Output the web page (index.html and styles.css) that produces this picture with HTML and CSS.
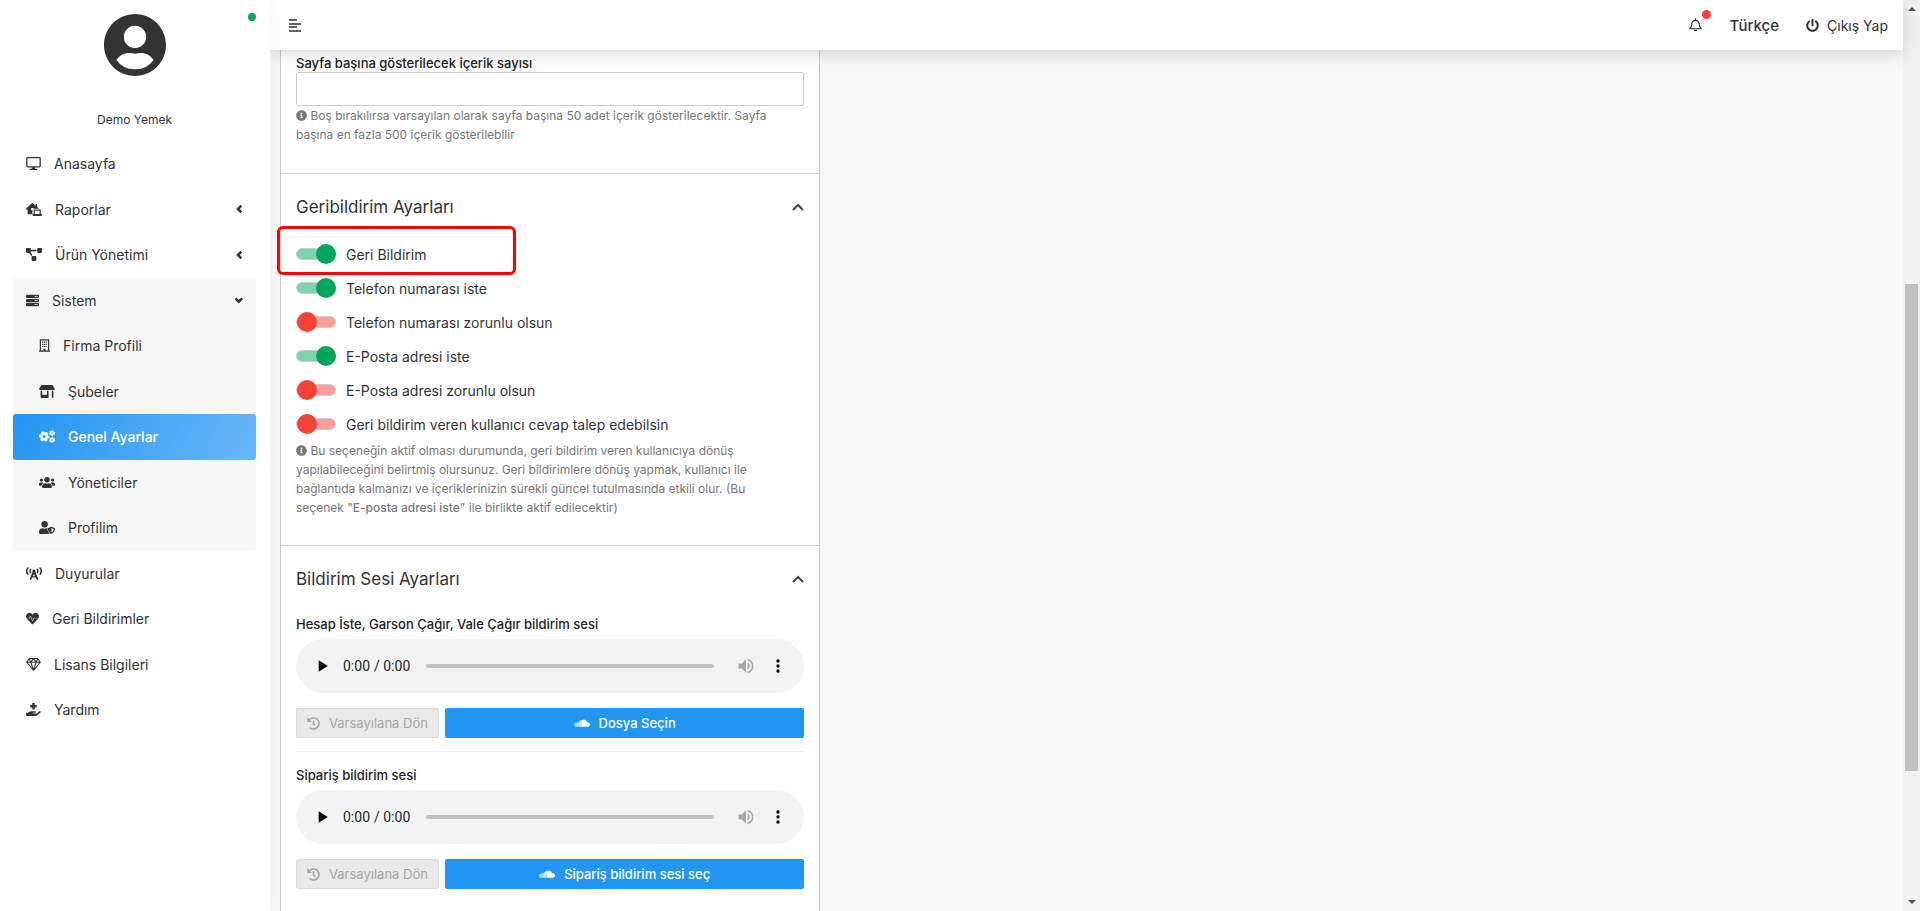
FILE: index.html
```
<!DOCTYPE html>
<html lang="tr">
<head>
    <meta charset="UTF-8">
    <meta name="viewport" content="width=device-width, initial-scale=1.0">
    <title>Genel Ayarlar</title>
    <link rel="stylesheet" href="styles.css">
</head>
<body>
    <!-- icons -->
    <svg class="sprite" aria-hidden="true">
        <symbol id="desktop" viewBox="0 0 576 512"><path fill-rule="evenodd" d="M528 0H48C21.5 0 0 21.5 0 48v320c0 26.500 21.500 48 48 48h192l-16 48h-72c-13 0-24 11-24 24s11 24 24 24h272c13 0 24-11 24-24s-11-24-24-24h-72l-16-48h192c26.500 0 48-21.500 48-48V48c0-26.500-21.500-48-48-48zM50 50h476v316H50z"/></symbol>
        <symbol id="laptop-house" viewBox="0 0 640 512"><path d="M272 288H208v-80c0-9 7-16 16-16h64c9 0 16 7 16 16v24c12-5 26-8 40-8h170L448 158V48c0-9-7-16-16-16h-32c-9 0-16 7-16 16v53L282 8c-14-11-38-11-52 0L12 206c-9 8-16 24-7 34l20 22c9 9 21 6 28 0l11-10v164c0 18 14 32 32 32h160V296z"/><path fill-rule="evenodd" d="M304 256h288v184h48v24c0 26-22 48-48 48H304c-26 0-48-22-48-48v-24h48zm48 48v136h192V304z"/></symbol>
        <symbol id="diagram" viewBox="0 0 640 512"><path d="M384 320H256c-17.670 0-32 14.330-32 32v128c0 17.670 14.330 32 32 32h128c17.670 0 32-14.330 32-32V352c0-17.670-14.330-32-32-32zM192 32c0-17.670-14.330-32-32-32H32C14.330 0 0 14.330 0 32v128c0 17.670 14.330 32 32 32h95.720l73.160 128.040C211.980 300.980 232.400 288 256 288h.280L192 175.510V128h224V64H192V32zM608 0H480c-17.670 0-32 14.330-32 32v128c0 17.670 14.330 32 32 32h128c17.670 0 32-14.330 32-32V32c0-17.670-14.330-32-32-32z"/></symbol>
        <symbol id="server" viewBox="0 0 512 512"><rect y="32" width="512" height="128" rx="32"/><rect y="192" width="512" height="128" rx="32"/><rect y="352" width="512" height="128" rx="32"/><path stroke="#f7f7f7" stroke-width="44" stroke-dasharray="44 22" d="M344 96h112M344 256h112M344 416h112"/></symbol>
        <symbol id="building" viewBox="0 0 448 512"><path fill-rule="evenodd" d="M32 0h384v464h32v48H0v-48h32zm48 48v416h104v-80h80v80h104V48z"/><path d="M128 96h48v48h-48zM200 96h48v48h-48zM272 96h48v48h-48zM128 184h48v48h-48zM200 184h48v48h-48zM272 184h48v48h-48zM128 272h48v48h-48zM200 272h48v48h-48zM272 272h48v48h-48z"/></symbol>
        <symbol id="store" viewBox="0 0 640 512"><path d="M320 384H128V224H64v256c0 17.700 14.300 32 32 32h256c17.700 0 32-14.300 32-32V224h-64v160zm314.600-241.800l-85.300-128c-6-8.900-16-14.200-26.700-14.200H117.400c-10.700 0-20.700 5.300-26.600 14.200l-85.300 128c-14.200 21.300 1 49.800 26.600 49.800H608c25.500 0 40.700-28.500 26.600-49.800zM512 496c0 8.800 7.200 16 16 16h32c8.800 0 16-7.200 16-16V224h-64v272z"/></symbol>
        <symbol id="cogs" viewBox="0 0 640 512"><g fill="none" stroke="currentColor"><circle cx="205" cy="256" r="115" stroke-width="104"/><circle cx="205" cy="256" r="172" stroke-width="72" stroke-dasharray="98 82" stroke-dashoffset="45"/><circle cx="520" cy="118" r="62" stroke-width="60"/><circle cx="520" cy="118" r="96" stroke-width="44" stroke-dasharray="54 46"/><circle cx="520" cy="394" r="62" stroke-width="60"/><circle cx="520" cy="394" r="96" stroke-width="44" stroke-dasharray="54 46"/></g></symbol>
        <symbol id="users" viewBox="0 0 640 512"><path d="M96 224c35.300 0 64-28.700 64-64s-28.700-64-64-64-64 28.700-64 64 28.700 64 64 64zm448 0c35.300 0 64-28.700 64-64s-28.700-64-64-64-64 28.700-64 64 28.700 64 64 64zm32 32h-64c-17.600 0-33.500 7.100-45.100 18.600 40.300 22.100 68.900 62 75.100 109.400h66c17.700 0 32-14.300 32-32v-32c0-35.300-28.700-64-64-64zm-256 0c61.900 0 112-50.100 112-112S381.900 32 320 32 208 82.100 208 144s50.100 112 112 112zm76.800 32h-8.300c-20.800 10-43.900 16-68.500 16s-47.600-6-68.500-16h-8.300C179.600 288 128 339.600 128 403.200V432c0 26.500 21.500 48 48 48h288c26.500 0 48-21.500 48-48v-28.800c0-63.600-51.600-115.200-115.200-115.200zm-223.700-13.400C161.500 263.100 145.600 256 128 256H64c-35.300 0-64 28.700-64 64v32c0 17.700 14.300 32 32 32h65.900c6.300-47.400 34.900-87.300 75.200-109.400z"/></symbol>
        <symbol id="user-shield" viewBox="0 0 640 512"><circle cx="224" cy="128" r="128"/><path d="M314 288c-54 22-126 22-180 0C60 288 0 348 0 422v42c0 26 22 48 48 48h352c15 0 22-3 30-8-60-48-94-120-94-216z"/><path fill-rule="evenodd" d="M622 271l-116-44c-6-3-14-3-20 0l-116 44c-11 4-18 14-18 25 0 124 77 190 134 214 6 3 14 3 20 0 46-19 134-81 134-214 0-11-7-21-18-25zM496 450V276l94 36c-6 76-53 120-94 138z"/></symbol>
        <symbol id="tower" viewBox="0 0 640 512"><g fill="none" stroke="currentColor" stroke-width="60" stroke-linecap="round"><path d="M76 34c-60 78-60 172 0 250M564 34c60 78 60 172 0 250M186 96c-26 44-26 88 0 126M454 96c26 44 26 88 0 126"/></g><circle cx="320" cy="160" r="64"/><path d="M278 170h84l140 326-64 16-40-94H242l-40 94-64-16zm42 104l-42 90h84z" fill-rule="evenodd"/></symbol>
        <symbol id="heartbeat" viewBox="0 0 512 512"><path d="M320 243l-48 106c-6 13-24 13-30-1l-69-166-30 73c-3 7-8 9-15 9H30c3 3-2-2 203 207 13 13 33 13 46 0 203-207 199-204 203-207h-98c-6 0-12-3-14-9zM474 74l-3-3c-50-52-132-52-183 0l-32 33-32-33C173 19 91 19 41 71l-3 3c-48 49-50 127-8 180h92l36-87c6-13 24-13 30 0l70 169 48-106c6-12 23-12 29 0l22 24h125c42-53 40-131-8-180z"/></symbol>
        <symbol id="gem" viewBox="0 0 576 512"><path fill="none" stroke="currentColor" stroke-width="42" stroke-linejoin="round" d="M120 22h336l98 146-266 320L22 168zM22 168h532M120 22l60 146 108 300 108-300 60-146M180 168L288 22l108 146"/></symbol>
        <symbol id="hand-medical" viewBox="0 0 576 512"><path d="M336 80V16c0-9-7-16-16-16h-64c-9 0-16 7-16 16v64h-64c-9 0-16 7-16 16v64c0 9 7 16 16 16h64v64c0 9 7 16 16 16h64c9 0 16-7 16-16v-64h64c9 0 16-7 16-16V96c0-9-7-16-16-16zM565 328c-12-11-31-10-43 0l-93 74c-11 9-25 14-40 14H272c-9 0-16-7-16-16s7-16 16-16h78c16 0 31-11 34-27 3-20-12-37-32-37H192c-27 0-53 9-74 26l-46 38H16c-9 0-16 7-16 16v96c0 9 7 16 16 16h357c14 0 28-5 39-14l152-121c15-12 16-35 1-49z"/></symbol>
        <symbol id="info" viewBox="0 0 512 512"><path d="M256 8C119.043 8 8 119.083 8 256c0 136.997 111.043 248 248 248s248-111.003 248-248C504 119.083 392.957 8 256 8zm0 110c23.196 0 42 18.804 42 42s-18.804 42-42 42-42-18.804-42-42 18.804-42 42-42zm56 254c0 6.627-5.373 12-12 12h-88c-6.627 0-12-5.373-12-12v-24c0-6.627 5.373-12 12-12h12v-64h-12c-6.627 0-12-5.373-12-12v-24c0-6.627 5.373-12 12-12h64c6.627 0 12 5.373 12 12v100h12c6.627 0 12 5.373 12 12v24z"/></symbol>
        <symbol id="power" viewBox="0 0 512 512"><path d="M400 54.100c63 45 104 118.600 104 201.900 0 136.800-110.800 247.700-247.500 248C120 504.300 8.200 393 8 256.400 7.900 173.100 48.900 99.300 111.800 54.200c11.700-8.300 28-4.800 35 7.700L162.600 90c5.900 10.500 3.100 23.800-6.600 31-41.500 30.800-68 79.600-68 134.900-.1 92.300 74.500 168.100 168 168.100 91.600 0 168.600-74.200 168-169.100-.3-51.800-24.700-101.800-68.100-134-9.700-7.200-12.400-20.500-6.500-30.900l15.800-28.100c7-12.400 23.200-16.100 34.800-7.800zM296 264V24c0-13.300-10.700-24-24-24h-32c-13.300 0-24 10.700-24 24v240c0 13.300 10.700 24 24 24h32c13.300 0 24-10.700 24-24z"/></symbol>
        <symbol id="history" viewBox="0 0 512 512"><path d="M504 255.531c.253 136.640-111.180 248.372-247.820 248.468-59.015.042-113.223-20.530-155.822-54.911-11.077-8.940-11.905-25.541-1.839-35.607l11.267-11.267c8.609-8.609 22.353-9.551 31.891-1.984C173.062 425.135 212.781 440 256 440c101.705 0 184-82.311 184-184 0-101.705-82.311-184-184-184-48.814 0-93.149 18.969-126.068 49.932l50.754 50.754c10.080 10.080 2.941 27.314-11.313 27.314H24c-8.837 0-16-7.163-16-16V38.627c0-14.254 17.234-21.393 27.314-11.314l49.372 49.372C129.209 34.136 189.552 8 256 8c136.810 0 247.747 110.780 248 247.531zm-180.912 78.784l9.823-12.630c8.138-10.463 6.253-25.542-4.210-33.679L288 256.349V152c0-13.255-10.745-24-24-24h-16c-13.255 0-24 10.745-24 24v135.651l65.409 50.874c10.463 8.137 25.541 6.253 33.679-4.210z"/></symbol>
        <symbol id="soundcloud" viewBox="0 0 640 512"><path d="M310 120c88-54 196-6 210 92 66-18 120 22 120 84 0 52-38 88-84 88H310z"/><path opacity=".8" d="M180 200c30-20 44-42 62-54 24-16 44-22 68-26v264H180z"/><path opacity=".7" d="M0 300c6-46 44-76 90-74 30-4 60-14 90-26v184H84c-50 0-84-36-84-84z"/></symbol>
        <symbol id="arrow-left" viewBox="0 0 12 12"><path d="M10 2L6 6l4 4" fill="none" stroke="currentColor" stroke-width="3"/></symbol>
        <symbol id="arrow-down" viewBox="0 0 12 12"><path d="M3 4l4 4 4-4" fill="none" stroke="currentColor" stroke-width="3"/></symbol>
        <symbol id="arrow-up" viewBox="0 0 12 12"><path d="M1 9l5-5 5 5" fill="none" stroke="#444" stroke-width="2"/></symbol>
    </svg>

    <div class="layout">
        <aside class="sidebar">
            <span class="online"></span>
            <div class="user">
                <svg class="avatar" viewBox="2 2 20 20"><path d="M12 2C6.480 2 2 6.480 2 12s4.480 10 10 10 10-4.480 10-10S17.520 2 12 2zm0 3.800a3.600 3.600 0 0 1 0 7.200 3.600 3.600 0 0 1 0-7.200zm0 14a7.200 7.200 0 0 1-6-3c1.600-2.200 3.600-2.600 6-2 2.400-.6 4.400-.2 6 2a7.200 7.200 0 0 1-6 3z"/></svg>
                <p>Demo Yemek</p>
            </div>
            <nav class="menu">
                <a href="#"><svg class="w15"><use href="#desktop"/></svg>Anasayfa</a>
                <a href="#"><svg class="w16"><use href="#laptop-house"/></svg>Raporlar<svg class="arrow"><use href="#arrow-left"/></svg></a>
                <a href="#"><svg class="w16"><use href="#diagram"/></svg>Ürün Yönetimi<svg class="arrow"><use href="#arrow-left"/></svg></a>
                <div class="group">
                    <a href="#"><svg class="w13"><use href="#server"/></svg>Sistem<svg class="arrow"><use href="#arrow-down"/></svg></a>
                    <div class="submenu">
                        <a href="#"><svg class="w11"><use href="#building"/></svg>Firma Profili</a>
                        <a href="#"><svg class="w16"><use href="#store"/></svg>Şubeler</a>
                        <a href="#" class="active"><svg class="w16"><use href="#cogs"/></svg>Genel Ayarlar</a>
                        <a href="#"><svg class="w16"><use href="#users"/></svg>Yöneticiler</a>
                        <a href="#"><svg class="w16"><use href="#user-shield"/></svg>Profilim</a>
                    </div>
                </div>
                <a href="#"><svg class="w16"><use href="#tower"/></svg>Duyurular</a>
                <a href="#"><svg class="w13"><use href="#heartbeat"/></svg>Geri Bildirimler</a>
                <a href="#"><svg class="w15"><use href="#gem"/></svg>Lisans Bilgileri</a>
                <a href="#"><svg class="w15"><use href="#hand-medical"/></svg>Yardım</a>
            </nav>
        </aside>

        <div class="page">
            <header class="topbar">
                <button type="button" class="toggle-menu" aria-label="Menü">
                    <svg viewBox="0 0 13 13"><path d="M0 1h8M0 5h12M0 8h8M0 12h12" stroke="currentColor" stroke-width="1.400"/></svg>
                </button>
                <div class="top-links">
                    <a href="#" class="bell" aria-label="Bildirimler">
                        <svg viewBox="0 0 14 14"><path d="M1 11h12c-1-1-2-2-2-5 0-2-2-4-4-4S3 4 3 6c0 3-1 4-2 5zM7 2V0" fill="none" stroke="currentColor" stroke-width="1.200"/><path d="M5 12h4c0 2-4 2-4 0z"/></svg>
                        <span class="dot"></span>
                    </a>
                    <a href="#" class="lang">Türkçe</a>
                    <a href="#" class="logout"><svg><use href="#power"/></svg>Çıkış Yap</a>
                </div>
            </header>

            <main class="content">
                <div class="card">
                    <section class="first">
                        <label class="title-label" for="count">Sayfa başına gösterilecek içerik sayısı</label>
                        <input id="count" class="text-box" type="text">
                        <p class="help"><svg><use href="#info"/></svg> Boş bırakılırsa varsayılan olarak sayfa başına 50 adet içerik gösterilecektir. Sayfa başına en fazla 500 içerik gösterilebilir</p>
                    </section>

                    <section>
                        <h2>Geribildirim Ayarları <svg><use href="#arrow-up"/></svg></h2>
                        <div class="switches">
                            <label class="switch marked"><input type="checkbox" checked>Geri Bildirim</label>
                            <label class="switch"><input type="checkbox" checked>Telefon numarası iste</label>
                            <label class="switch"><input type="checkbox">Telefon numarası zorunlu olsun</label>
                            <label class="switch"><input type="checkbox" checked>E-Posta adresi iste</label>
                            <label class="switch"><input type="checkbox">E-Posta adresi zorunlu olsun</label>
                            <label class="switch"><input type="checkbox">Geri bildirim veren kullanıcı cevap talep edebilsin</label>
                        </div>
                        <p class="help"><svg><use href="#info"/></svg> Bu seçeneğin aktif olması durumunda, geri bildirim veren kullanıcıya dönüş yapılabileceğini belirtmiş olursunuz. Geri bildirimlere dönüş yapmak, kullanıcı ile bağlantıda kalmanızı ve içeriklerinizin sürekli güncel tutulmasında etkili olur. (Bu seçenek "<b>E-posta adresi iste</b>" ile birlikte aktif edilecektir)</p>
                    </section>

                    <section>
                        <h2>Bildirim Sesi Ayarları <svg><use href="#arrow-up"/></svg></h2>
                        <div class="sound">
                            <p class="title-label">Hesap İste, Garson Çağır, Vale Çağır bildirim sesi</p>
                            <audio controls preload="none" src="bildirim.mp3"></audio>
                            <div class="buttons">
                                <button type="button" class="btn-reset" disabled><svg class="w13"><use href="#history"/></svg>Varsayılana Dön</button>
                                <button type="button" class="btn-file"><svg class="w16"><use href="#soundcloud"/></svg>Dosya Seçin</button>
                            </div>
                        </div>
                        <div class="sound">
                            <p class="title-label">Sipariş bildirim sesi</p>
                            <audio controls preload="none" src="siparis.mp3"></audio>
                            <div class="buttons">
                                <button type="button" class="btn-reset" disabled><svg class="w13"><use href="#history"/></svg>Varsayılana Dön</button>
                                <button type="button" class="btn-file"><svg class="w16"><use href="#soundcloud"/></svg>Sipariş bildirim sesi seç</button>
                            </div>
                        </div>
                    </section>
                </div>
            </main>
        </div>

        <div class="scrollbar">
            <span class="up"></span>
            <div class="rail"><div class="thumb"></div></div>
            <span class="down"></span>
        </div>
    </div>
</body>
</html>
```
FILE: styles.css
```
*, *::before, *::after {
    box-sizing: border-box;
}
body {
    margin: 0;
    font-family: Inter, "Open Sans", sans-serif;
    font-size: 14px;
    color: #333;
    background-color: #f8f8f8;
    overflow: hidden;
}
a {
    color: inherit;
    text-decoration: none;
}
p, h2 {
    margin: 0;
}
svg {
    fill: currentColor;
    flex-shrink: 0;
}
.sprite {
    display: none;
}
.layout {
    display: flex;
    height: 100vh;
}

/* sidebar */
.sidebar {
    position: relative;
    z-index: 3;
    width: 270px;
    flex-shrink: 0;
    padding: 14px 14px 0 13px;
    background-color: #fff;
    box-shadow: 0 0 15px rgba(0, 0, 0, 0.05);
}
.online {
    position: absolute;
    top: 13px;
    right: 14px;
    width: 8px;
    height: 8px;
    border-radius: 50%;
    background-color: #00a65a;
}
.user {
    display: flex;
    flex-direction: column;
    align-items: center;
    gap: 35px;
    margin-bottom: 12px;
    font-size: 12px;
    line-height: 18px;
}
.avatar {
    width: 62px;
    height: 62px;
}
.menu a {
    display: flex;
    align-items: center;
    height: 3.25em;
    padding: 0 13px;
    border-radius: 3px;
}
.menu svg {
    height: 13px;
    margin-right: 13px;
}
.w11 {
    width: 11px;
}
.w13 {
    width: 13px;
}
.w15 {
    width: 15px;
}
.w16 {
    width: 16px;
}
.menu .arrow {
    width: 10px;
    height: 10px;
    margin: 0 0 0 auto;
}
.group {
    background-color: #f7f7f7;
    border-radius: 3px;
}
.submenu a {
    padding-left: 26px;
}
.submenu .active {
    color: #fff;
    font-weight: 500;
    background: linear-gradient(118deg, #2196f3, #6ab7f7);
}

/* top bar */
.page {
    flex: 1;
    min-width: 0;
    display: flex;
    flex-direction: column;
}
.topbar {
    position: relative;
    z-index: 2;
    display: flex;
    justify-content: space-between;
    align-items: center;
    flex-shrink: 0;
    height: 50px;
    padding: 0 15px 0 19px;
    background-color: #fff;
    box-shadow: 0 4px 15px rgba(0, 0, 0, 0.15);
}
.toggle-menu {
    padding: 0;
    border: none;
    background: none;
    color: #333;
    cursor: pointer;
}
.toggle-menu svg {
    display: block;
    width: 13px;
    height: 13px;
}
.top-links, .logout {
    display: flex;
    align-items: center;
}
.bell {
    position: relative;
    margin-right: 27px;
}
.bell svg {
    display: block;
    width: 13px;
    height: 14px;
}
.dot {
    position: absolute;
    top: -8px;
    right: -9px;
    width: 9px;
    height: 9px;
    border-radius: 50%;
    background-color: #f44336;
}
.lang {
    margin-right: 27px;
    font-size: 15px;
    font-weight: 500;
}
.logout svg {
    width: 13px;
    height: 13px;
    margin-right: 8px;
}

/* settings */
.content {
    flex: 1;
    min-height: 0;
    padding-left: 10px;
    display: flex;
}
.card {
    width: 33.3%;
    background-color: #fff;
    border: 1px solid #ccc;
    border-width: 0 1px;
}
.card section {
    padding: 0 15px 28px;
    border-bottom: 1px solid #ccc;
}
.card section:last-child {
    border-bottom: none;
}
.card .first {
    padding-top: 4px;
    padding-bottom: 29px;
}
.title-label {
    display: block;
    font-size: 13px;
    font-weight: 500;
    line-height: 18px;
    color: #222;
}
.text-box {
    display: block;
    width: 100%;
    height: 34px;
    padding: 0 10px;
    border: 1px solid #ccc;
    border-radius: 2px;
    font: inherit;
}
.help {
    padding-right: 12px;
    font-size: 12px;
    line-height: 19px;
    color: #777;
}
.help svg {
    width: 11px;
    height: 11px;
    vertical-align: -1px;
}
.help b {
    font-weight: 500;
}
h2 {
    display: flex;
    justify-content: space-between;
    align-items: center;
    padding-top: 21px;
    font-size: 17px;
    font-weight: 400;
    line-height: 24px;
}
h2 svg {
    width: 12px;
    height: 12px;
}
.switches {
    padding-top: 18px;
}
.switch {
    position: relative;
    display: flex;
    align-items: center;
    gap: 10px;
    height: 34px;
}
.switch input {
    appearance: none;
    position: relative;
    width: 40px;
    height: 12px;
    margin: 0;
    border: 1px solid #ccc;
    border-radius: 6px;
    background-color: #fa9f99;
}
.switch input::before {
    content: "";
    position: absolute;
    top: -5px;
    left: 0;
    width: 20px;
    height: 20px;
    border-radius: 50%;
    background-color: #f44336;
}
.switch input:checked {
    background-color: #80d2ac;
}
.switch input:checked::before {
    left: auto;
    right: -1px;
    background-color: #00a65a;
}
/* red frame around the setting */
.marked::after {
    content: "";
    position: absolute;
    top: -11px;
    left: -19px;
    width: 239px;
    height: 49px;
    border: 3px solid #f00;
    border-radius: 6px;
}
.sound {
    padding-top: 14px;
}
h2 + .sound {
    padding-top: 24px;
}
.sound + .sound {
    margin-top: 13px;
    border-top: 1px solid #eee;
}
audio {
    display: block;
    width: 100%;
    height: 54px;
    margin: 6px 0 15px;
}
.buttons {
    display: flex;
    gap: 6px;
}
.buttons button {
    display: flex;
    justify-content: center;
    align-items: center;
    gap: 9px;
    height: 30px;
    padding: 0 10px;
    border: none;
    border-radius: 2px;
    font-family: inherit;
    font-size: 13px;
}
.buttons svg {
    height: 13px;
}
.buttons .btn-reset {
    color: #a6a6a6;
    background-color: #e9e9e9;
    border: 1px solid #ddd;
}
.buttons .btn-file {
    flex: 1;
    color: #fff;
    font-weight: 500;
    background-color: #2196f3;
    cursor: pointer;
}

/* scrollbar */
.scrollbar {
    display: flex;
    flex-direction: column;
    align-items: center;
    justify-content: space-between;
    width: 17px;
    padding: 7px 2px;
    background-color: #f1f1f1;
}
.rail {
    flex: 1;
    width: 13px;
    padding: 10px 0;
}
.thumb {
    height: 56%;
    margin-top: 263px;
    background-color: #c1c1c1;
}
.up, .down {
    border: 4px solid transparent;
    border-top-width: 0;
    border-bottom-color: #505050;
}
.down {
    border-width: 4px 4px 0;
    border-top-color: #505050;
}
```
